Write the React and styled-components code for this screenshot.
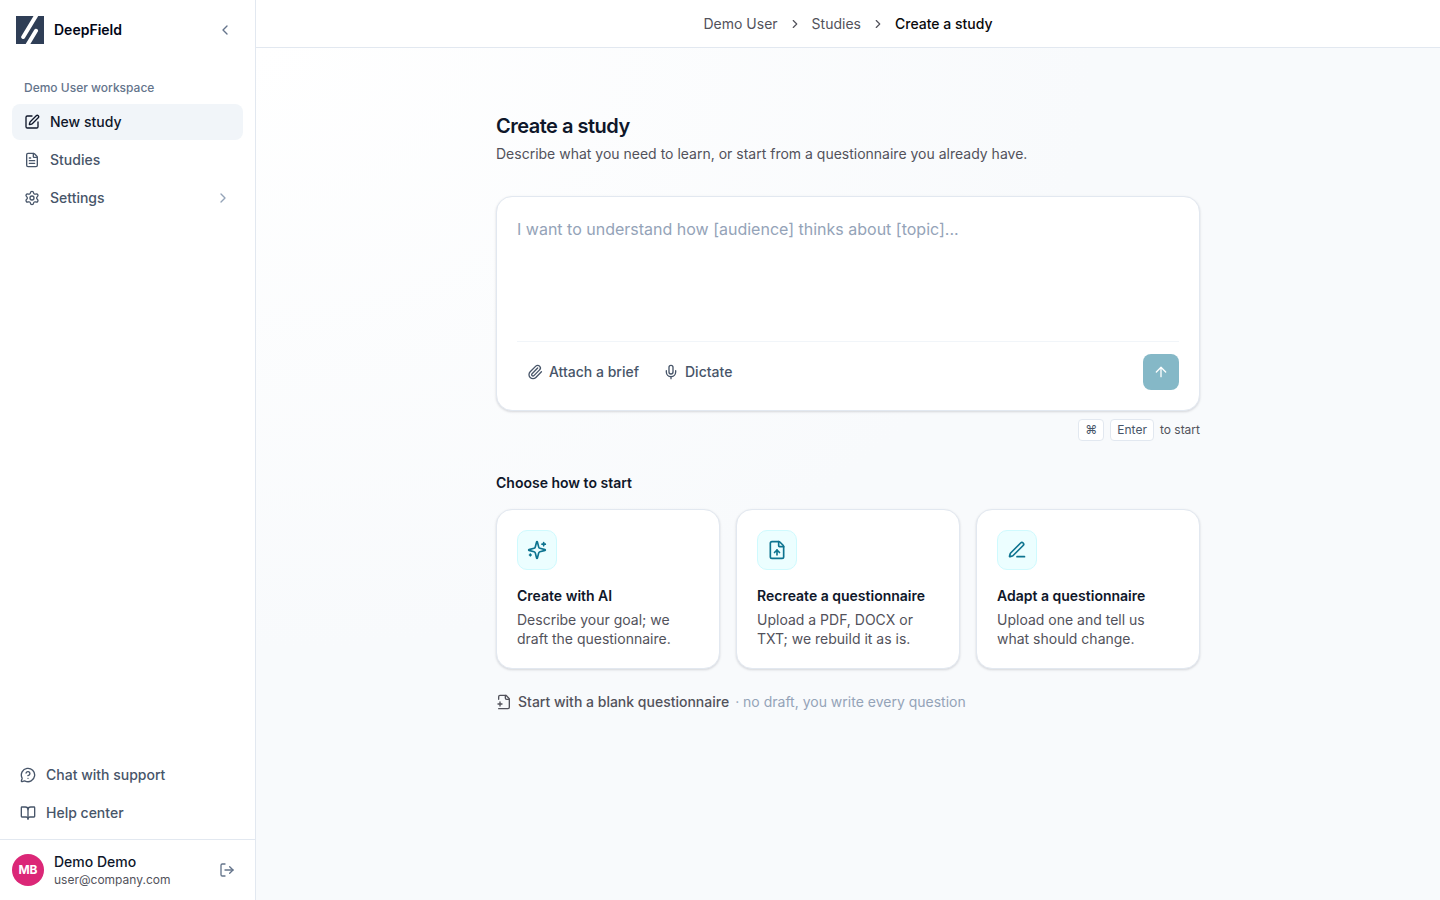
import React, { useState } from "react";
import styled, { createGlobalStyle } from "styled-components";
import {
  ArrowUp,
  BookOpen,
  ChevronLeft,
  ChevronRight,
  FileText,
  FileUp,
  LogOut,
  MessageCircleQuestionMark,
  Mic,
  Paperclip,
  Settings,
} from "lucide-react";

const GlobalStyle = createGlobalStyle`
  * { box-sizing: border-box; }
  body {
    margin: 0;
    font-family: Inter, "Liberation Sans", sans-serif;
    font-size: 14px;
    line-height: 20px;
    color: #0f172a;
  }
  h1, h2, h3, p { margin: 0; }
  button, textarea { font: inherit; }
  button { cursor: pointer; }
  a { color: inherit; text-decoration: none; }
  svg { flex-shrink: 0; }
`;

const Layout = styled.div`
  display: flex;
  min-height: 100vh;
`;

const Sidebar = styled.aside`
  width: 256px;
  flex-shrink: 0;
  display: flex;
  flex-direction: column;
  background: #fff;
  border-right: 1px solid #e2e8f0;
`;

const Brand = styled.div`
  display: flex;
  align-items: center;
  gap: 10px;
  padding: 16px;
  font-weight: 600;
  color: #020617;
`;

const IconButton = styled.button`
  display: flex;
  align-items: center;
  justify-content: center;
  width: ${({ $size }) => $size || 28}px;
  height: ${({ $size }) => $size || 28}px;
  margin-left: auto;
  padding: 0;
  border: none;
  border-radius: 6px;
  background: transparent;
  color: #64748b;
`;

const Nav = styled.nav`
  display: flex;
  flex-direction: column;
  gap: 2px;
  padding: 20px 12px 0;
`;

const NavLabel = styled.p`
  padding: 0 12px;
  margin-bottom: 6px;
  font-size: 12px;
  line-height: 16px;
  font-weight: 500;
  color: #64748b;
`;

const NavLink = styled.a`
  display: flex;
  align-items: center;
  gap: 10px;
  height: 36px;
  padding: 0 12px;
  border-radius: 8px;
  font-weight: 500;
  color: ${({ $active }) => ($active ? "#0f172a" : "#475569")};
  background: ${({ $active }) => ($active ? "#f1f5f9" : "transparent")};

  .end {
    margin-left: auto;
    color: #94a3b8;
  }
`;

const FooterNav = styled.nav`
  display: flex;
  flex-direction: column;
  gap: 2px;
  margin-top: auto;
  padding: 8px;
`;

const Account = styled.div`
  display: flex;
  align-items: center;
  gap: 10px;
  padding: 12px;
  border-top: 1px solid #e2e8f0;
  font-weight: 500;

  small {
    display: block;
    font-size: 12px;
    line-height: 16px;
    font-weight: 400;
    color: #52525b;
  }
`;

const Avatar = styled.div`
  display: flex;
  align-items: center;
  justify-content: center;
  width: 32px;
  height: 32px;
  border-radius: 50%;
  background: #db2777;
  color: #fff;
  font-size: 12px;
  font-weight: 700;
`;

const Main = styled.main`
  flex: 1;
  min-width: 0;
  display: flex;
  flex-direction: column;
`;

const Breadcrumbs = styled.nav`
  display: flex;
  align-items: center;
  justify-content: center;
  gap: 10px;
  height: 48px;
  background: #fff;
  border-bottom: 1px solid #e2e8f0;
  color: #52525b;

  span {
    font-weight: 500;
    color: #09090b;
  }
`;

const Content = styled.div`
  flex: 1;
  padding: 64px 24px;
  background: radial-gradient(ellipse at top left, #fff 0%, #f8fafc 50%);
`;

const Column = styled.div`
  max-width: 704px;
  margin: 0 auto;
`;

const Title = styled.h1`
  font-size: 20px;
  line-height: 28px;
  font-weight: 600;
  letter-spacing: -0.025em;
`;

const Subtitle = styled.p`
  margin-top: 4px;
  color: #52525b;
`;

const Composer = styled.form`
  margin-top: 32px;
  padding: 20px;
  background: #fff;
  border: 1px solid #e2e8f0;
  border-radius: 16px;
  box-shadow: 0 1px 3px rgba(15, 23, 42, 0.1), 0 1px 2px rgba(15, 23, 42, 0.06);
`;

const Prompt = styled.textarea`
  display: block;
  width: 100%;
  height: 112px;
  padding: 0;
  border: none;
  outline: none;
  resize: none;
  background: transparent;
  font-size: 16px;
  line-height: 24px;
  color: #0f172a;

  &::placeholder {
    color: #94a3b8;
    opacity: 1;
  }
`;

const Toolbar = styled.div`
  display: flex;
  align-items: center;
  gap: 4px;
  margin-top: 12px;
  padding-top: 12px;
  border-top: 1px solid #f1f5f9;
`;

const ToolButton = styled.button`
  display: flex;
  align-items: center;
  gap: 6px;
  height: 36px;
  padding: 0 10px;
  border: none;
  border-radius: 8px;
  background: transparent;
  font-weight: 500;
  color: #475569;
`;

const SendButton = styled.button`
  display: flex;
  align-items: center;
  justify-content: center;
  width: 36px;
  height: 36px;
  margin-left: auto;
  padding: 0;
  border: none;
  border-radius: 8px;
  background: #0e7490;
  color: #fff;
  opacity: ${({ disabled }) => (disabled ? 0.5 : 1)};
`;

const Hint = styled.div`
  display: flex;
  align-items: center;
  justify-content: flex-end;
  gap: 6px;
  margin-top: 8px;
  font-size: 12px;
  line-height: 16px;
  color: #52525b;
`;

const Key = styled.kbd`
  padding: 2px 6px;
  background: #fff;
  border: 1px solid #e2e8f0;
  border-radius: 4px;
  font-family: inherit;
  color: #475569;
`;

const SectionTitle = styled.h2`
  margin: 32px 0 16px;
  font-size: 14px;
  line-height: 20px;
  font-weight: 600;
`;

const Cards = styled.div`
  display: grid;
  grid-template-columns: repeat(3, 1fr);
  gap: 16px;
`;

const Card = styled.button`
  display: flex;
  flex-direction: column;
  align-items: flex-start;
  padding: 20px;
  background: #fff;
  border: 1px solid #e2e8f0;
  border-radius: 16px;
  box-shadow: 0 1px 3px rgba(15, 23, 42, 0.1), 0 1px 2px rgba(15, 23, 42, 0.06);
  text-align: left;
`;

const CardIcon = styled.span`
  display: flex;
  align-items: center;
  justify-content: center;
  width: 40px;
  height: 40px;
  margin-bottom: 16px;
  background: #ecfeff;
  border: 1px solid #cffafe;
  border-radius: 10px;
  color: #0e7490;
`;

const CardTitle = styled.span`
  font-weight: 600;
  color: #0f172a;
`;

const CardText = styled.span`
  margin-top: 4px;
  line-height: 19px;
  color: #52525b;
`;

const BlankLink = styled.a`
  display: flex;
  width: fit-content;
  align-items: center;
  gap: 6px;
  margin-top: 23px;
  font-weight: 500;
  color: #52525b;

  span {
    font-weight: 400;
    color: #94a3b8;
  }
`;

function Icon({ size = 16, width = 2, children }) {
  return (
    <svg
      width={size}
      height={size}
      viewBox="0 0 24 24"
      fill="none"
      stroke="currentColor"
      strokeWidth={width}
      strokeLinecap="round"
      strokeLinejoin="round"
      aria-hidden="true"
    >
      {children}
    </svg>
  );
}

function Logo() {
  return (
    <svg width="28" height="28" viewBox="0 0 28 28" aria-hidden="true">
      <rect width="28" height="28" fill="#2f3e56" />
      <g stroke="#fff" strokeWidth="4" strokeLinecap="round">
        <path d="M7.2 21 20.8-1.5" />
        <path d="M20 14.8 10.5 30.5" />
      </g>
    </svg>
  );
}

function EditIcon() {
  return (
    <Icon>
      <path d="M12 3H5a2 2 0 0 0-2 2v14a2 2 0 0 0 2 2h14a2 2 0 0 0 2-2v-7" />
      <path d="M18.375 2.625a1 1 0 0 1 3 3l-9.013 9.014a2 2 0 0 1-.853.505l-2.873.84a.5.5 0 0 1-.62-.62l.84-2.873a2 2 0 0 1 .506-.852z" />
    </Icon>
  );
}

function SparklesIcon() {
  return (
    <Icon size={20}>
      <path d="M9.937 15.5A2 2 0 0 0 8.5 14.063l-6.135-1.582a.5.5 0 0 1 0-.962L8.5 9.936A2 2 0 0 0 9.937 8.5l1.582-6.135a.5.5 0 0 1 .963 0L14.063 8.5A2 2 0 0 0 15.5 9.937l6.135 1.581a.5.5 0 0 1 0 .964L15.5 14.063a2 2 0 0 0-1.437 1.437l-1.582 6.135a.5.5 0 0 1-.963 0z" />
      <path d="M20 3v4M22 5h-4M4 17v2M5 18H3" />
    </Icon>
  );
}

function PenLineIcon() {
  return (
    <Icon size={20}>
      <path d="M12 20h9" />
      <path d="M16.376 3.622a1 1 0 0 1 3.002 3.002L7.368 18.635a2 2 0 0 1-.855.506l-2.872.838a.5.5 0 0 1-.62-.62l.838-2.872a2 2 0 0 1 .506-.854z" />
    </Icon>
  );
}

function FilePlusIcon() {
  return (
    <Icon>
      <path d="M4 22h14a2 2 0 0 0 2-2V7l-5-5H6a2 2 0 0 0-2 2v4" />
      <path d="M14 2v4a2 2 0 0 0 2 2h4" />
      <path d="M3 15h6M6 12v6" />
    </Icon>
  );
}

const starters = [
  {
    icon: <SparklesIcon />,
    title: "Create with AI",
    text: "Describe your goal; we draft the questionnaire.",
  },
  {
    icon: <FileUp size={20} />,
    title: "Recreate a questionnaire",
    text: "Upload a PDF, DOCX or TXT; we rebuild it as is.",
  },
  {
    icon: <PenLineIcon />,
    title: "Adapt a questionnaire",
    text: "Upload one and tell us what should change.",
  },
];

function App() {
  const [prompt, setPrompt] = useState("");

  return (
    <>
      <GlobalStyle />
      <Layout>
        <Sidebar>
          <Brand>
            <Logo />
            DeepField
            <IconButton type="button" aria-label="Collapse sidebar">
              <ChevronLeft size={16} />
            </IconButton>
          </Brand>
          <Nav>
            <NavLabel>Demo User workspace</NavLabel>
            <NavLink href="#new" $active>
              <EditIcon />
              New study
            </NavLink>
            <NavLink href="#studies">
              <FileText size={16} />
              Studies
            </NavLink>
            <NavLink href="#settings">
              <Settings size={16} />
              Settings
              <ChevronRight className="end" size={16} />
            </NavLink>
          </Nav>
          <FooterNav>
            <NavLink href="#support">
              <MessageCircleQuestionMark size={16} />
              Chat with support
            </NavLink>
            <NavLink href="#help">
              <BookOpen size={16} />
              Help center
            </NavLink>
          </FooterNav>
          <Account>
            <Avatar>MB</Avatar>
            <div>
              Demo Demo
              <small>user@company.com</small>
            </div>
            <IconButton type="button" aria-label="Log out" $size={32}>
              <LogOut size={16} />
            </IconButton>
          </Account>
        </Sidebar>

        <Main>
          <Breadcrumbs aria-label="Breadcrumb">
            <a href="#user">Demo User</a>
            <ChevronRight size={14} />
            <a href="#studies">Studies</a>
            <ChevronRight size={14} />
            <span>Create a study</span>
          </Breadcrumbs>
          <Content>
            <Column>
              <Title>Create a study</Title>
              <Subtitle>
                Describe what you need to learn, or start from a questionnaire you already have.
              </Subtitle>

              <Composer onSubmit={(e) => e.preventDefault()}>
                <Prompt
                  aria-label="Study goal"
                  placeholder="I want to understand how [audience] thinks about [topic]..."
                  value={prompt}
                  onChange={(e) => setPrompt(e.target.value)}
                />
                <Toolbar>
                  <ToolButton type="button">
                    <Paperclip size={16} />
                    Attach a brief
                  </ToolButton>
                  <ToolButton type="button">
                    <Mic size={16} />
                    Dictate
                  </ToolButton>
                  <SendButton type="submit" aria-label="Start" disabled={!prompt.trim()}>
                    <ArrowUp size={16} />
                  </SendButton>
                </Toolbar>
              </Composer>
              <Hint>
                <Key>⌘</Key>
                <Key>Enter</Key>
                to start
              </Hint>

              <SectionTitle>Choose how to start</SectionTitle>
              <Cards>
                {starters.map((s) => (
                  <Card key={s.title} type="button">
                    <CardIcon>{s.icon}</CardIcon>
                    <CardTitle>{s.title}</CardTitle>
                    <CardText>{s.text}</CardText>
                  </Card>
                ))}
              </Cards>
              <BlankLink href="#blank">
                <FilePlusIcon />
                Start with a blank questionnaire
                <span>· no draft, you write every question</span>
              </BlankLink>
            </Column>
          </Content>
        </Main>
      </Layout>
    </>
  );
}

export default App;
